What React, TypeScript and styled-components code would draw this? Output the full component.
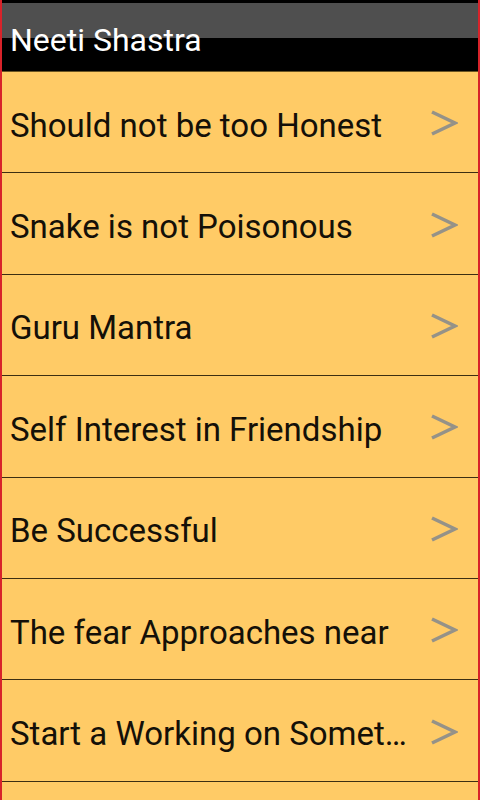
import styled, { createGlobalStyle } from 'styled-components';

const GlobalStyle = createGlobalStyle`
    html, body {
        margin: 0;
        padding: 0;
        background: #ffcb66;
    }
`;

const Screen = styled.div`
    width: 480px;
    height: 800px;
    overflow: hidden;
    box-sizing: border-box;
    border-left: 2px solid #d8232a;
    border-right: 2px solid #d8232a;
    background: #ffcb66;
    font-family: Roboto, "Noto Sans", sans-serif;
    display: flex;
    flex-direction: column;
`;

const Header = styled.div`
    height: 72px;
    flex-shrink: 0;
    display: flex;
    align-items: center;
    padding: 0 8px;
    box-sizing: border-box;
    background: linear-gradient(
        to bottom,
        #000 0px,
        #000 3px,
        #4f4f4f 3px,
        #4f4f4f 38px,
        #000 38px,
        #000 100%
    );
    border-bottom: 1px solid #6b5523;
`;

const Title = styled.div`
    color: #fff;
    font-size: 32px;
    line-height: 1;
    padding-top: 8px;
`;

const List = styled.div`
    display: flex;
    flex-direction: column;
`;

const Row = styled.div`
    height: 101.4px;
    flex-shrink: 0;
    box-sizing: border-box;
    border-bottom: 1.5px solid #3d2f12;
    display: flex;
    align-items: center;
    padding: 6px 20px 0 8px;
`;

const Label = styled.div`
    flex: 1;
    min-width: 0;
    color: #141008;
    font-size: 33px;
    white-space: nowrap;
    overflow: hidden;
    text-overflow: ellipsis;
    padding-right: 18px;
`;

const Arrow = styled.svg`
    width: 28px;
    height: 28px;
    flex-shrink: 0;
    margin-top: -4px;
`;

const Chevron = () => (
    <Arrow viewBox="0 0 28 28">
        <polyline
            points="2,3 25,14 2,25"
            fill="none"
            stroke="#959288"
            strokeWidth="3.6"
            strokeLinejoin="miter"
        />
    </Arrow>
);

const items = [
    'Should not be too Honest',
    'Snake is not Poisonous',
    'Guru Mantra',
    'Self Interest in Friendship',
    'Be Successful',
    'The fear Approaches near',
    'Start a Working on Something New',
    'Never Give Up',
];

export default function App() {
    return (
        <>
            <GlobalStyle />
            <Screen>
                <Header>
                    <Title>Neeti Shastra</Title>
                </Header>
                <List>
                    {items.map((item) => (
                        <Row key={item}>
                            <Label>{item}</Label>
                            <Chevron />
                        </Row>
                    ))}
                </List>
            </Screen>
        </>
    );
}
